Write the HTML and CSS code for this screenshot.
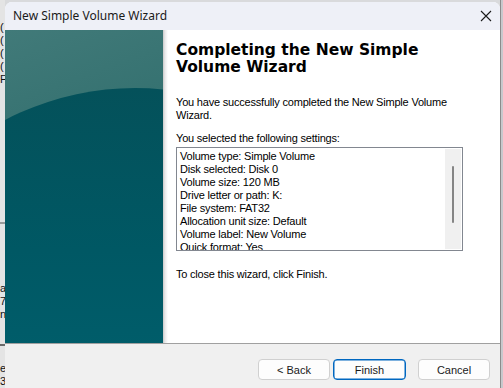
FILE: index.html
```html
<!DOCTYPE html>
<html lang="en">
<head>
  <meta charset="UTF-8" />
  <title>New Simple Volume Wizard</title>
  <link rel="stylesheet" href="styles.css">
</head>
<body>
  <div class="behind">
    <div class="behind-top">(<br>(<br>(<br>(<br>F</div>
    <div class="behind-mid">a:<br>7<br>n</div>
    <div class="behind-bottom">e<br>3.</div>
  </div>

  <div class="window">
    <div class="titlebar">
      <span class="title">New Simple Volume Wizard</span>
      <svg class="close" width="12" height="12" viewBox="0 0 12 12">
        <path d="M1 1 L11 11 M11 1 L1 11" stroke="#1a1a1a" stroke-width="1.1" fill="none" />
      </svg>
    </div>

    <div class="main">
      <div class="panel"></div>
      <div class="content">
        <h1>Completing the New Simple Volume Wizard</h1>
        <p class="intro">You have successfully completed the New Simple Volume Wizard.</p>
        <p class="label">You selected the following settings:</p>
        <div class="settings">
          <div class="settings-list">
            <div>Volume type: Simple Volume</div>
            <div>Disk selected: Disk 0</div>
            <div>Volume size: 120 MB</div>
            <div>Drive letter or path: K:</div>
            <div>File system: FAT32</div>
            <div>Allocation unit size: Default</div>
            <div>Volume label: New Volume</div>
            <div>Quick format: Yes</div>
          </div>
          <div class="scrollbar"><div class="thumb"></div></div>
        </div>
        <p class="finish-note">To close this wizard, click Finish.</p>
      </div>
    </div>

    <div class="footer">
      <button class="btn">&lt; Back</button>
      <button class="btn btn-default">Finish</button>
      <button class="btn btn-cancel">Cancel</button>
    </div>
  </div>

  <div class="behind-right"></div>
</body>
</html>
```

FILE: styles.css
```css
* {
  margin: 0;
  padding: 0;
  box-sizing: border-box;
}
body {
  width: 503px;
  height: 388px;
  overflow: hidden;
  display: flex;
  background: #d9dadc;
  font-family: 'Liberation Sans', Arial, sans-serif;
  font-size: 11px;
  color: #000;
}
.behind {
  width: 5px;
  overflow: hidden;
  background: #e4e4e4;
  color: #111;
  font-size: 11px;
  line-height: 13px;
  white-space: nowrap;
  display: flex;
  flex-direction: column;
}
.behind-top {
  padding-top: 21px;
  height: 222px;
}
.behind-mid {
  border-top: 2px solid #9a9a9a;
  padding-top: 58px;
  height: 122px;
}
.behind-bottom {
  border-top: 2px solid #6a6a6a;
  padding-top: 16px;
  flex: 1;
}
.behind-right {
  width: 3px;
  background: #c8c8cc;
  border-left: 1px solid #8c8c8c;
}
.window {
  flex: 1;
  margin-top: 2px;
  display: flex;
  flex-direction: column;
  border-radius: 7px 7px 0 0;
  overflow: hidden;
  background: #fff;
}
.titlebar {
  height: 28px;
  flex: none;
  display: flex;
  align-items: center;
  justify-content: space-between;
  padding: 0 8px 0 8px;
  background: #eef0f7;
  font-family: 'Noto Sans', 'Open Sans', sans-serif;
  font-size: 12px;
  color: #1a1a1a;
}
.title {
  margin-top: -1px;
}
.close {
  margin-top: -1px;
}
.main {
  height: 313px;
  flex: none;
  display: flex;
}
.panel {
  width: 158px;
  flex: none;
  position: relative;
  overflow: hidden;
  background: linear-gradient(160deg, #417a79 0%, #33706f 40%, #2a6766 100%);
}
.panel::before {
  content: '';
  position: absolute;
  left: -170px;
  top: 58px;
  width: 600px;
  height: 646px;
  border-radius: 50%;
  background: linear-gradient(180deg, #04515a 0%, #005864 25%, #00606e 50%);
}
.content {
  flex: 1;
  padding: 12px 0 0 13px;
  background: linear-gradient(90deg, #c9c9c9 0, #e9e9e9 2px, #fff 5px);
  letter-spacing: -0.2px;
}
h1 {
  font-family: 'DejaVu Sans', Verdana, sans-serif;
  font-weight: bold;
  font-size: 15.5px;
  line-height: 17px;
  width: 260px;
  margin-bottom: 20px;
  letter-spacing: 0;
  color: #000;
}
.intro {
  width: 285px;
  line-height: 13px;
  margin-bottom: 10px;
}
.label {
  line-height: 13px;
  margin-bottom: 2px;
}
.settings {
  width: 287px;
  height: 104px;
  border: 1px solid #828790;
  display: flex;
  overflow: hidden;
}
.settings-list {
  flex: 1;
  padding: 2px 0 0 3px;
  line-height: 13px;
}
.scrollbar {
  width: 16px;
  margin: 1px 1px 1px 0;
  background: #f0f0f0;
  display: flex;
  justify-content: center;
  padding-top: 17px;
}
.thumb {
  width: 2px;
  height: 57px;
  background: #858585;
  border-radius: 1px;
}
.finish-note {
  margin-top: 17px;
  line-height: 13px;
}
.footer {
  flex: 1;
  border-top: 1px solid #a0a0a0;
  background: #f0f0f0;
  display: flex;
  justify-content: flex-end;
  align-items: flex-start;
  padding: 15px 10px 0 0;
  gap: 3px;
}
.btn {
  width: 72px;
  height: 21px;
  border: 1px solid #d0d0d0;
  border-radius: 4px;
  background: #fdfdfd;
  font-family: 'Liberation Sans', Arial, sans-serif;
  font-size: 11px;
  color: #1a1a1a;
}
.btn-default {
  width: 73px;
  border-color: #0067c0;
  box-shadow: inset 0 0 0 0.5px #0067c0;
}
.btn-cancel {
  margin-left: 9px;
}
```
